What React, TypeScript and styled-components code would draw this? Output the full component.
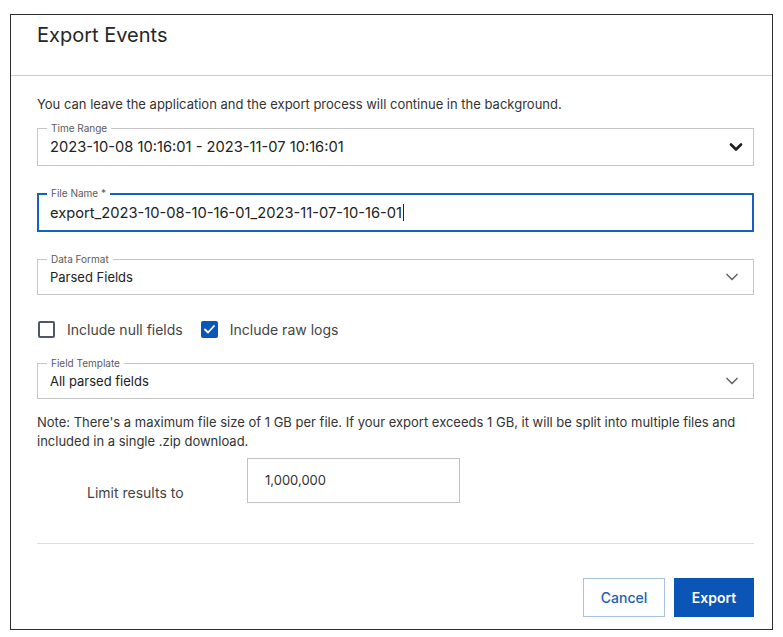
import React from "react";
import styled, { createGlobalStyle } from "styled-components";

const Global = createGlobalStyle`
  html, body { margin: 0; padding: 0; background: #fff; }
  body { font-family: Inter, "Noto Sans", "Liberation Sans", sans-serif; color: #222; }
  * { box-sizing: border-box; }
`;

const Page = styled.div`
  padding: 14px 0 0 10px;
`;

const Dialog = styled.div`
  width: 763px;
  border: 1px solid #2e2e2e;
  background: #fff;
  display: flex;
  flex-direction: column;
`;

const Header = styled.div`
  height: 61px;
  padding: 8px 26px 0;
  border-bottom: 1px solid #cfcfcf;
`;

const Title = styled.h2`
  margin: 0;
  font-size: 20px;
  line-height: 24px;
  font-weight: 400;
  color: #262626;
`;

const Body = styled.div`
  display: flex;
  flex-direction: column;
  padding: 19px 18px 12px 26px;
`;

const Text = styled.p<{ $mt?: number }>`
  margin: ${(p) => p.$mt ?? 0}px 0 0;
  font-size: 13px;
  line-height: 19px;
  color: #333;
`;

const Field = styled.div<{ $mt: number; $focused?: boolean; $h: number }>`
  position: relative;
  margin-top: ${(p) => p.$mt}px;
  height: ${(p) => p.$h}px;
  border: ${(p) => (p.$focused ? "2px solid #1560c2" : "1px solid #c6c6c6")};
  display: flex;
  align-items: center;
  justify-content: space-between;
  padding: 0 ${(p) => (p.$focused ? 11 : 12)}px;
`;

const FieldLabel = styled.span<{ $focused?: boolean }>`
  position: absolute;
  left: ${(p) => (p.$focused ? 8 : 9)}px;
  top: ${(p) => (p.$focused ? -8 : -7)}px;
  padding: 0 4px;
  background: #fff;
  font-size: 10px;
  line-height: 12px;
  color: #5a5a5a;
`;

const Value = styled.span<{ $large?: boolean }>`
  font-size: ${(p) => (p.$large ? "14.7px" : "13px")};
  line-height: 18px;
  color: #222;
  display: flex;
  align-items: center;
`;

const Caret = styled.span`
  display: inline-block;
  width: 1px;
  height: 17px;
  background: #222;
  margin-left: 1px;
`;

const Chevron = styled.svg<{ $strong?: boolean }>`
  width: 14px;
  height: 9px;
  margin-right: ${(p) => (p.$strong ? -2 : 2)}px;
  flex: none;
`;

const CheckRow = styled.div`
  margin-top: 24px;
  height: 20px;
  display: flex;
  align-items: center;
  padding-left: 1px;
`;

const CheckItem = styled.label`
  display: flex;
  align-items: center;
  gap: 12px;
  margin-right: 18px;
  font-size: 14px;
  color: #444;
`;

const Box = styled.span<{ $checked?: boolean }>`
  width: 17px;
  height: 17px;
  border-radius: 2px;
  border: 2px solid ${(p) => (p.$checked ? "#0b57b8" : "#505866")};
  background: ${(p) => (p.$checked ? "#0b57b8" : "#fff")};
  display: flex;
  align-items: center;
  justify-content: center;
`;

const LimitRow = styled.div`
  margin-top: 7px;
  display: flex;
  align-items: flex-end;
`;

const LimitLabel = styled.span`
  width: 210px;
  padding-left: 50px;
  padding-bottom: 1px;
  font-size: 14px;
  line-height: 18px;
  color: #444;
`;

const LimitInput = styled.div`
  width: 213px;
  height: 45px;
  border: 1px solid #c2c2c2;
  padding: 12px 0 0 17px;
  font-size: 13px;
  line-height: 19px;
  color: #333;
`;

const Divider = styled.div`
  margin-top: 40px;
  height: 1px;
  background: #dedede;
`;

const Footer = styled.div`
  margin-top: 34px;
  display: flex;
  justify-content: flex-end;
  gap: 9px;
`;

const Button = styled.button<{ $primary?: boolean }>`
  height: 39px;
  width: ${(p) => (p.$primary ? 80 : 82)}px;
  font-family: inherit;
  font-size: 14px;
  font-weight: ${(p) => (p.$primary ? 600 : 500)};
  border: 1px solid ${(p) => (p.$primary ? "#0a55b5" : "#a8c3e6")};
  background: ${(p) => (p.$primary ? "#0a55b5" : "#fff")};
  color: ${(p) => (p.$primary ? "#fff" : "#1b5fb6")};
  cursor: pointer;
  padding: 0;
`;

const ChevronIcon = ({ strong }: { strong?: boolean }) => (
  <Chevron $strong={strong} viewBox="0 0 14 9">
    <path
      d="M2 1.5 L7 6.5 L12 1.5"
      fill="none"
      stroke={strong ? "#1e1e1e" : "#6a6a6a"}
      strokeWidth={strong ? 2.6 : 1.7}
      strokeLinecap="round"
      strokeLinejoin="round"
    />
  </Chevron>
);

export default function App() {
  return (
    <>
      <Global />
      <Page>
        <Dialog>
          <Header>
            <Title>Export Events</Title>
          </Header>
          <Body>
            <Text>You can leave the application and the export process will continue in the background.</Text>

            <Field $mt={14} $h={38}>
              <FieldLabel>Time Range</FieldLabel>
              <Value $large>2023-10-08 10:16:01 - 2023-11-07 10:16:01</Value>
              <ChevronIcon strong />
            </Field>

            <Field $mt={27} $h={39} $focused>
              <FieldLabel $focused>File Name *</FieldLabel>
              <Value $large>
                export_2023-10-08-10-16-01_2023-11-07-10-16-01
                <Caret />
              </Value>
            </Field>

            <Field $mt={27} $h={36}>
              <FieldLabel>Data Format</FieldLabel>
              <Value>Parsed Fields</Value>
              <ChevronIcon />
            </Field>

            <CheckRow>
              <CheckItem>
                <Box />
                Include null fields
              </CheckItem>
              <CheckItem>
                <Box $checked>
                  <svg width="11" height="9" viewBox="0 0 11 9">
                    <path d="M1 4.5 L4 7.5 L10 1" fill="none" stroke="#fff" strokeWidth="1.8" strokeLinecap="round" strokeLinejoin="round" />
                  </svg>
                </Box>
                Include raw logs
              </CheckItem>
            </CheckRow>

            <Field $mt={24} $h={36}>
              <FieldLabel>Field Template</FieldLabel>
              <Value>All parsed fields</Value>
              <ChevronIcon />
            </Field>

            <Text $mt={14}>
              Note: There's a maximum file size of 1 GB per file. If your export exceeds 1 GB, it will be split into multiple files and included in a single .zip download.
            </Text>

            <LimitRow>
              <LimitLabel>Limit results to</LimitLabel>
              <LimitInput>1,000,000</LimitInput>
            </LimitRow>

            <Divider />

            <Footer>
              <Button>Cancel</Button>
              <Button $primary>Export</Button>
            </Footer>
          </Body>
        </Dialog>
      </Page>
    </>
  );
}
